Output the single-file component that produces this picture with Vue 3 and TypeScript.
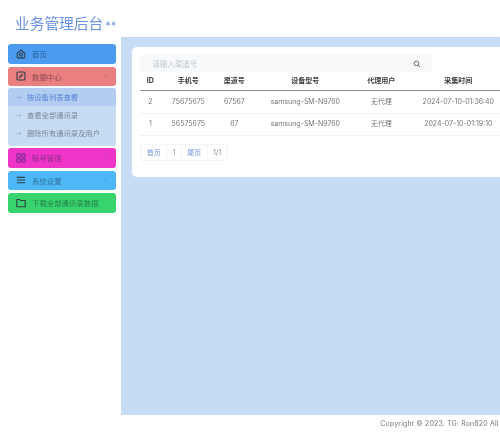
<script setup lang="ts">
interface Row { id: number; phone: string; channel: string; device: string; proxy: string; time: string }
const rows: Row[] = [
  { id: 2, phone: '75675675', channel: '67567', device: 'samsung-SM-N9760', proxy: '无代理', time: '2024-07-10-01:36:40' },
  { id: 1, phone: '56575675', channel: '67', device: 'samsung-SM-N9760', proxy: '无代理', time: '2024-07-10-01:19:10' },
]
const subs = ['按设备列表查看', '查看全部通讯录', '删除所有通讯录及用户']
</script>

<template>
  <div class="app">
    <aside class="side">
      <div class="logo"><span class="logo-text">业务管理后台</span><span class="logo-mark">⁎⁎</span></div>
      <nav class="menu">
        <div class="item home">
          <svg class="ico" viewBox="0 0 12 12"><path d="M1.4 5.2 6 1.2l4.6 4v4.4a1 1 0 0 1-1 1H2.4a1 1 0 0 1-1-1z" /><circle cx="6" cy="6.6" r="1.8" /></svg>
          <span>首页</span>
        </div>
        <div class="item data">
          <svg class="ico" viewBox="0 0 12 12"><rect x="1.2" y="1.2" width="9.6" height="9.6" rx="1.2" /><path d="M4 8.2 8 4" stroke-width="1.6" /></svg>
          <span>数据中心</span>
          <svg class="arrow" viewBox="0 0 8 8"><path d="M1 2.5 4 5.5 7 2.5" /></svg>
        </div>
        <div class="subs">
          <div v-for="(s, i) in subs" :key="s" class="sub" :class="{ active: i === 0 }"><span class="dot">→</span>{{ s }}</div>
        </div>
        <div class="item acct">
          <svg class="ico acct-ico" viewBox="0 0 12 12"><rect x="1" y="1" width="4" height="4" rx="0.8" /><rect x="7" y="1" width="4" height="4" rx="0.8" /><rect x="1" y="7" width="4" height="4" rx="0.8" /><rect x="7" y="7" width="4" height="4" rx="0.8" /></svg>
          <span>账号管理</span>
          <svg class="arrow" viewBox="0 0 8 8"><path d="M5.5 1 2.5 4 5.5 7" /></svg>
        </div>
        <div class="item sys">
          <svg class="ico" viewBox="0 0 12 12"><path d="M1 2.8h10M1 6h10M1 9.2h10" /></svg>
          <span>系统设置</span>
          <svg class="arrow" viewBox="0 0 8 8"><path d="M5.5 1 2.5 4 5.5 7" /></svg>
        </div>
        <div class="item down">
          <svg class="ico" viewBox="0 0 12 12"><path d="M1 1.8h3.6l1 1.2H11v7.4H1z" /></svg>
          <span>下载全部通讯录数据</span>
        </div>
      </nav>
    </aside>
    <main class="main">
      <header class="top"></header>
      <section class="content">
        <div class="card">
          <div class="search">
            <span class="ph">请输入渠道号</span>
            <svg class="mag" viewBox="0 0 10 10"><circle cx="4.3" cy="4.3" r="2.9" /><path d="M6.5 6.5 9 9" /></svg>
          </div>
          <table class="tbl">
            <colgroup>
              <col class="c1" /><col class="c2" /><col class="c3" /><col class="c4" /><col class="c5" /><col class="c6" />
            </colgroup>
            <thead>
              <tr><th>ID</th><th>手机号</th><th>渠道号</th><th>设备型号</th><th>代理用户</th><th>采集时间</th></tr>
            </thead>
            <tbody>
              <tr v-for="r in rows" :key="r.id">
                <td>{{ r.id }}</td><td>{{ r.phone }}</td><td>{{ r.channel }}</td><td>{{ r.device }}</td><td>{{ r.proxy }}</td><td>{{ r.time }}</td>
              </tr>
            </tbody>
          </table>
          <div class="pager">
            <span class="pg link">首页</span><span class="pg">1</span><span class="pg link">尾页</span><span class="pg">1/1</span>
          </div>
        </div>
      </section>
      <footer class="foot">Copyright © 2023. TG: Ron820 All</footer>
    </main>
  </div>
</template>

<style>
html, body { margin: 0; overflow: hidden; background: #fff; }
</style>

<style scoped>
.app {
  display: flex;
  width: 500px;
  height: 437px;
  overflow: hidden;
  font-family: "Inter", "Noto Sans CJK SC", sans-serif;
  font-size: 7px;
  color: #555;
  filter: blur(0.35px);
}
.side { flex: 0 0 121px; box-sizing: border-box; background: #fff; padding: 0 5px 0 8px; }
.logo { height: 44px; display: flex; align-items: center; gap: 2px; padding: 0 0 0 7px; white-space: nowrap; }
.logo-text { font-size: 14.7px; color: #6a93e0; font-family: "Noto Sans CJK SC", sans-serif; }
.logo-mark { font-size: 10px; color: #7d9fdc; font-weight: 700; margin-top: -2px; }
.menu { display: flex; flex-direction: column; gap: 3px; }
.item {
  height: 19.5px;
  border-radius: 3px;
  display: flex;
  align-items: center;
  padding: 0 7px 0 8px;
  gap: 6px;
  font-size: 7.4px;
  font-family: "Noto Sans CJK SC", sans-serif;
}
.item span { flex: 1; }
.home { background: #4b9cf0; color: #2a5f98; }
.data { background: #e97f7f; color: #8c4552; }
.acct { background: #ee35c8; color: #922f8c; }
.sys { background: #4db8f5; color: #33739f; }
.down { background: #37d36c; color: #25804a; }
.ico { width: 10px; height: 10px; fill: none; stroke: #2f3d48; stroke-width: 1.3; flex: none; }
.acct-ico { stroke: #7a2a90; }
.arrow { width: 6px; height: 6px; fill: none; stroke: rgba(70, 90, 110, 0.28); stroke-width: 1; flex: none; }
.subs { background: #c5dcf3; border-radius: 3px; margin: -1.5px 0 -1px; padding-bottom: 4.5px; }
.sub { height: 18px; display: flex; align-items: center; padding-left: 8px; font-size: 7.3px; color: #7a8794; font-family: "Noto Sans CJK SC", sans-serif; }
.sub.active { background: #b3cdf2; color: #5583d4; border-radius: 3px 3px 0 0; }
.dot { width: 11px; font-size: 5px; }
.main { flex: 1; min-width: 0; display: flex; flex-direction: column; background: #c5dcf3; }
.top { flex: 0 0 37px; background: #fff; box-shadow: 0 0 2px rgba(0, 0, 0, 0.05); }
.content { flex: 1; padding: 10px 0 0 11px; overflow: hidden; }
.card { width: 400px; height: 130px; box-sizing: border-box; background: #fff; border-radius: 5px; padding: 8px; }
.search { width: 292px; height: 17px; box-sizing: border-box; background: #f8f9fb; display: flex; align-items: center; justify-content: space-between; padding: 0 11px 0 12px; }
.ph { font-size: 7.5px; color: #c3c8d0; font-family: "Noto Sans CJK SC", sans-serif; }
.mag { width: 8px; height: 8px; fill: none; stroke: #555; stroke-width: 1.1; }
.tbl { table-layout: fixed; width: 372px; border-collapse: collapse; line-height: 10px; }
.c1 { width: 20px; } .c2 { width: 56px; } .c3 { width: 36px; } .c4 { width: 106px; } .c5 { width: 46px; } .c6 { width: 108px; }
th { height: 18px; padding: 0; font-weight: 700; color: #3a3a3a; border-bottom: 1px solid #8f949a; text-align: center; }
td { height: 21.5px; padding: 0; color: #777; text-align: center; border-bottom: 1px solid #f0f2f4; white-space: nowrap; }
.pager { display: flex; margin-top: 8px; width: max-content; border: 1px solid #f3f4f7; border-radius: 2px; }
.pg { height: 15px; line-height: 15px; padding: 0 5.4px; color: #8a8f96; border-right: 1px solid #f5f6f8; }
.pg:last-child { border-right: 0; }
.pg.link { color: #6f95e2; }
.foot { flex: 0 0 22px; background: #fff; line-height: 17px; padding-left: 259px; white-space: nowrap; color: #777; letter-spacing: 0.15px; }
</style>
